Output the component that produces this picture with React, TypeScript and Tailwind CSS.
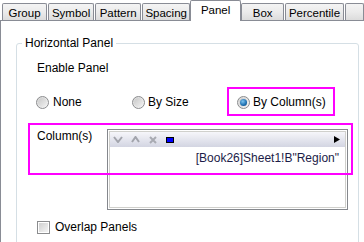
import React from "react";

function Radio({ checked }: { checked?: boolean }) {
  return (
    <div className="w-[13px] h-[13px] rounded-full border border-[#8b8c8e] bg-gradient-to-br from-[#d9d9d9] to-[#f6f6f6] flex items-center justify-center shrink-0">
      <div className="w-[9px] h-[9px] rounded-full bg-gradient-to-br from-[#c8c8c8] to-[#f2f2f2] flex items-center justify-center">
        {checked && (
          <div className="w-[7px] h-[7px] rounded-full bg-[radial-gradient(circle_at_40%_35%,#7ec4f0,#1b6eb0_60%,#0d3e70)]" />
        )}
      </div>
    </div>
  );
}

function Tab({ label, w, selected }: { label: string; w: number; selected?: boolean }) {
  if (selected) {
    return (
      <div
        className="relative z-10 h-[21px] -mb-px border border-b-0 border-[#898c95] rounded-t-[2px] bg-white flex justify-center pt-[2px] leading-[14px] text-[11.5px] whitespace-nowrap"
        style={{ width: w }}
      >
        {label}
      </div>
    );
  }
  return (
    <div
      className="h-[17px] border border-b-0 border-[#898c95] rounded-t-[2px] bg-gradient-to-b from-[#f4f4f4] via-[#ebebeb] to-[#dcdcdc] flex justify-center pt-[2px] leading-[14px] text-[11.5px] whitespace-nowrap"
      style={{ width: w }}
    >
      {label}
    </div>
  );
}

export default function App() {
  return (
    <div
      className="relative w-[364px] h-[242px] overflow-hidden bg-white text-[12px] text-black"
      style={{ fontFamily: '"Liberation Sans", Arial, sans-serif' }}
    >
      {/* tabs */}
      <div className="flex items-end h-[20px] pl-[2px]">
        <Tab label="Group" w={47} />
        <div className="w-[1px]" />
        <Tab label="Symbol" w={48} />
        <div className="w-[1px]" />
        <Tab label="Pattern" w={48} />
        <div className="w-[1px]" />
        <Tab label="Spacing" w={50} />
        <Tab label="Panel" selected w={53} />
        <Tab label="Box" w={45} />
        <div className="w-[1px]" />
        <Tab label="Percentile" w={61} />
        <div className="w-[1px]" />
        <Tab label="" w={20} />
      </div>

      {/* content */}
      <div className="border-t border-l border-[#898c95] h-[222px] pl-[15px] pt-[15px]">
        <fieldset className="w-[343px] h-[240px] border border-[#d5dfe5] rounded-[3px]">
          <legend className="ml-[5px] px-[3px] leading-[14px]">Horizontal Panel</legend>
          <div className="pl-[20px] pt-[11px] leading-[14px]">
            <div>Enable Panel</div>
            <div className="flex items-center mt-[20px] h-[14px] -ml-[1px]">
              <div className="w-[96px] flex items-center gap-[4px]">
                <Radio />
                <span>None</span>
              </div>
              <div className="w-[105px] flex items-center gap-[3px]">
                <Radio />
                <span>By Size</span>
              </div>
              <div className="flex items-center gap-[3px]">
                <Radio checked />
                <span>By Column(s)</span>
              </div>
            </div>

            <div className="flex items-start mt-[20px]">
              <div className="w-[70px]">Column(s)</div>
              <div className="w-[241px] h-[81px] border border-[#85888d] p-[1px]">
                <div className="h-full border border-[#d0d0cc] flex flex-col">
                  <div className="h-[15px] bg-gradient-to-b from-[#f6f6fa] to-[#d3d5e2] flex items-center pl-[3px] pr-[5px]">
                    <svg width="10" height="7" viewBox="0 0 10 7" className="mr-[8px]">
                      <path d="M1 1 L5 6 L9 1" stroke="#a2a4ac" strokeWidth="2" fill="none" />
                    </svg>
                    <svg width="9" height="7" viewBox="0 0 9 7" className="mr-[9px]">
                      <path d="M1 6 L4.5 1 L8 6" stroke="#a2a4ac" strokeWidth="2" fill="none" />
                    </svg>
                    <svg width="8" height="8" viewBox="0 0 8 8" className="mr-[9px]">
                      <path d="M1 1 L7 7 M7 1 L1 7" stroke="#a8aab2" strokeWidth="2" fill="none" />
                    </svg>
                    <div className="w-[8px] h-[6px] bg-[#0000ff] border border-black" />
                    <div className="flex-1" />
                    <svg width="6" height="7" viewBox="0 0 6 7">
                      <path d="M0 0 L6 3.5 L0 7 Z" fill="#000" />
                    </svg>
                  </div>
                  <div className="text-right pr-[6px] pt-[4px] leading-[14px] text-[#1c1c48]">
                    [Book26]Sheet1!B"Region"
                  </div>
                </div>
              </div>
            </div>

            <div className="flex items-center gap-[5px] mt-[10px]">
              <div className="w-[13px] h-[13px] border border-[#8b8c8e] p-[1px] bg-white">
                <div className="w-full h-full bg-gradient-to-br from-[#d0d0d0] to-[#f4f4f4]" />
              </div>
              <span>Overlap Panels</span>
            </div>
          </div>
        </fieldset>
      </div>

      {/* annotation boxes */}
      <div className="absolute left-[227px] top-[87px] w-[108px] h-[29px] border-2 border-[#ff00ff]" />
      <div className="absolute left-[28px] top-[123px] w-[325px] h-[52px] border-2 border-[#ff00ff]" />
    </div>
  );
}
